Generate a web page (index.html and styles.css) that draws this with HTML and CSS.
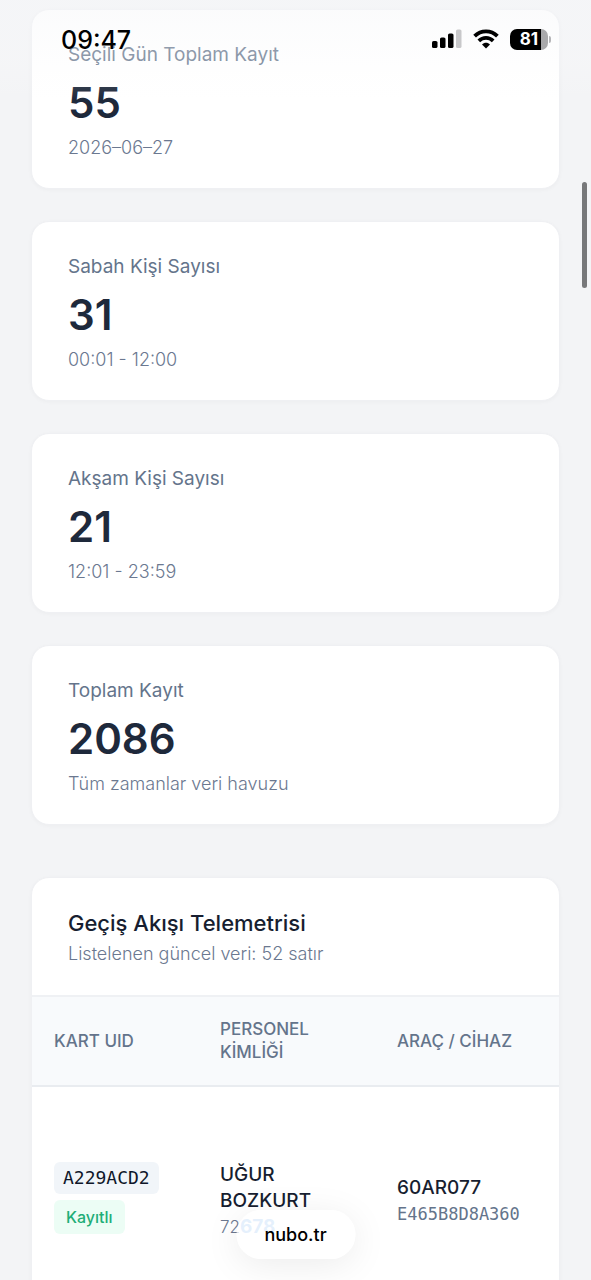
FILE: index.html
```html
<!DOCTYPE html>
<html lang="tr">
<head>
<meta charset="utf-8">
<meta name="viewport" content="width=device-width, initial-scale=1">
<title>nubo.tr</title>
<link rel="stylesheet" href="styles.css">
</head>
<body>
<div class="screen">
  <header class="status-bar">
    <time class="clock">09:47</time>
    <div class="indicators">
      <svg class="signal" viewBox="0 0 30 20" width="30" height="20" aria-label="Sinyal">
        <rect x="0" y="12" width="5.500" height="7" rx="1.600"/>
        <rect x="8" y="8.500" width="5.500" height="10.500" rx="1.600"/>
        <rect x="16" y="4.500" width="5.500" height="14.500" rx="1.600"/>
        <rect x="24" y="0.500" width="5.500" height="18.500" rx="1.600" fill="#c8c8ca"/>
      </svg>
      <svg class="wifi" viewBox="0 0 26 20" width="26" height="20" aria-label="Wi-Fi">
        <g fill="none" stroke="#000" stroke-width="3.800">
          <path d="M1.600 7.200C8 .8 18 .8 24.400 7.200"/>
          <path d="M5.800 11.800C10 7.800 16 7.800 20.200 11.800"/>
        </g>
        <path d="M13 19.400L9 15.400C11.300 13.200 14.700 13.200 17 15.400Z"/>
      </svg>
      <div class="battery">
        <div class="battery-body"><span>81</span></div>
        <div class="battery-tip"></div>
      </div>
    </div>
  </header>

  <main class="content">
    <section class="stats">
      <article class="card stat">
        <h2 class="stat-label">Seçili Gün Toplam Kayıt</h2>
        <p class="stat-value">55</p>
        <p class="stat-note">2026–06–27</p>
      </article>
      <article class="card stat">
        <h2 class="stat-label">Sabah Kişi Sayısı</h2>
        <p class="stat-value">31</p>
        <p class="stat-note">00:01 - 12:00</p>
      </article>
      <article class="card stat">
        <h2 class="stat-label">Akşam Kişi Sayısı</h2>
        <p class="stat-value">21</p>
        <p class="stat-note">12:01 - 23:59</p>
      </article>
      <article class="card stat">
        <h2 class="stat-label">Toplam Kayıt</h2>
        <p class="stat-value">2086</p>
        <p class="stat-note">Tüm zamanlar veri havuzu</p>
      </article>
    </section>

    <section class="card telemetry">
      <div class="telemetry-head">
        <h2 class="telemetry-title">Geçiş Akışı Telemetrisi</h2>
        <p class="stat-note">Listelenen güncel veri: 52 satır</p>
      </div>
      <table class="log">
        <thead>
          <tr>
            <th class="col-card" scope="col">KART UID</th>
            <th class="col-person" scope="col">PERSONEL KİMLİĞİ</th>
            <th class="col-device" scope="col">ARAÇ / CİHAZ</th>
          </tr>
        </thead>
        <tbody>
          <tr>
            <td>
              <div class="tags">
                <code class="uid">A229ACD2</code>
                <span class="badge">Kayıtlı</span>
              </div>
            </td>
            <td>
              <div class="strong">UĞUR BOZKURT</div>
              <div class="person-id">72<span class="id-tail">678</span></div>
            </td>
            <td>
              <div class="strong">60AR077</div>
              <div class="device-id">E465B8D8A360</div>
            </td>
          </tr>
        </tbody>
      </table>
    </section>
  </main>

  <div class="scroll-thumb"></div>
  <button class="address" type="button">nubo.tr</button>
</div>
</body>
</html>
```
FILE: styles.css
```css
* {
  box-sizing: border-box;
}

body {
  margin: 0;
  background: #f3f4f6;
  color: #1e293b;
  font-family: Inter, "Noto Sans", sans-serif;
}

h2,
p {
  margin: 0;
}

.screen {
  position: relative;
  height: 100vh;
  overflow: hidden;
}

.content {
  padding: 9px 31px 0;
}

.stats {
  display: grid;
  gap: 32px;
}

.card {
  background: #fff;
  border: 1px solid #eff0f3;
  border-radius: 18px;
  box-shadow: 0 1px 4px rgba(15, 23, 42, 0.03);
}

.stat {
  padding: 31px 36px 27px;
}

.stat-label {
  color: #64748b;
  font-size: 19px;
  font-weight: 400;
  line-height: 28px;
}

.stat-value {
  margin: 6px 0 4px;
  font-size: 42px;
  font-weight: 600;
  line-height: 56px;
}

.stat-note {
  color: #6b7890;
  font-size: 18px;
  font-weight: 300;
  line-height: 26px;
}

.telemetry {
  margin-top: 52px;
  overflow: hidden;
}

.telemetry-head {
  padding: 29px 36px 28px;
}

.telemetry-title {
  padding-bottom: 2px;
  color: #171e30;
  font-size: 22px;
  font-weight: 500;
  line-height: 32px;
}

.log {
  width: 100%;
  border-collapse: collapse;
  table-layout: fixed;
}

.log th,
.log td {
  padding: 0 22px;
  text-align: left;
  vertical-align: middle;
}

.log th {
  height: 90px;
  background: #f8fafc;
  border-top: 2px solid #eff1f4;
  border-bottom: 2px solid #e9ecf0;
  color: #64748b;
  font-size: 17px;
  font-weight: 500;
  line-height: 23px;
}

.log td {
  height: 228px;
}

.col-card {
  width: 166px;
}

.col-person {
  width: 177px;
}

.tags {
  display: flex;
  flex-direction: column;
  align-items: flex-start;
  gap: 6px;
  padding-bottom: 6px;
}

.uid {
  padding: 0 9px;
  border-radius: 6px;
  background: #f1f5f9;
  color: #0f172a;
  font-family: "DejaVu Sans Mono", monospace;
  font-size: 18px;
  line-height: 32px;
}

.badge {
  padding: 0 12px;
  border-radius: 6px;
  background: #ecfdf5;
  color: #1fae78;
  font-size: 16px;
  font-weight: 500;
  line-height: 34px;
}

.strong {
  color: #171e30;
  font-size: 19px;
  font-weight: 500;
  line-height: 26px;
}

.person-id {
  color: #6b7890;
  font-size: 17px;
  font-weight: 300;
  line-height: 26px;
}

.id-tail {
  color: #a9cdf5;
  font-size: 19px;
  font-weight: 700;
  line-height: 18px;
}

.device-id {
  color: #64748b;
  font-family: "DejaVu Sans Mono", monospace;
  font-size: 17px;
  line-height: 26px;
}

.status-bar {
  position: absolute;
  z-index: 2;
  inset: 0 0 auto;
  display: flex;
  justify-content: space-between;
  align-items: flex-start;
  height: 100px;
  padding: 24px 40px 0 61px;
  background: linear-gradient(rgba(246, 247, 249, 0.5), rgba(250, 250, 251, 0.25) 60%, rgba(255, 255, 255, 0));
  color: #000;
}

.clock {
  font-size: 25px;
  font-weight: 500;
  line-height: 32px;
}

.indicators {
  display: flex;
  align-items: center;
  gap: 11px;
  height: 30px;
}

.battery {
  display: flex;
  align-items: center;
  gap: 1px;
}

.battery-body {
  width: 38px;
  border-radius: 7px;
  background: linear-gradient(90deg, #000 81%, #a9a9ab 81%);
  color: #fff;
  font-size: 17px;
  font-weight: 700;
  line-height: 21px;
  text-align: center;
}

.battery-tip {
  width: 2px;
  height: 7px;
  border-radius: 0 2px 2px 0;
  background: #b5b5b8;
}

.scroll-thumb {
  position: absolute;
  top: 182px;
  right: 4px;
  width: 5px;
  height: 106px;
  border-radius: 3px;
  background: #77787a;
}

.address {
  position: absolute;
  bottom: 21px;
  left: 50%;
  width: 119px;
  height: 49px;
  padding: 0;
  transform: translateX(-50%);
  border: 0;
  border-radius: 25px;
  background: rgba(255, 255, 255, 0.7);
  box-shadow: 0 6px 36px rgba(0, 0, 0, 0.08);
  color: #000;
  font: 500 18px/26px Inter, "Noto Sans", sans-serif;
}
```
